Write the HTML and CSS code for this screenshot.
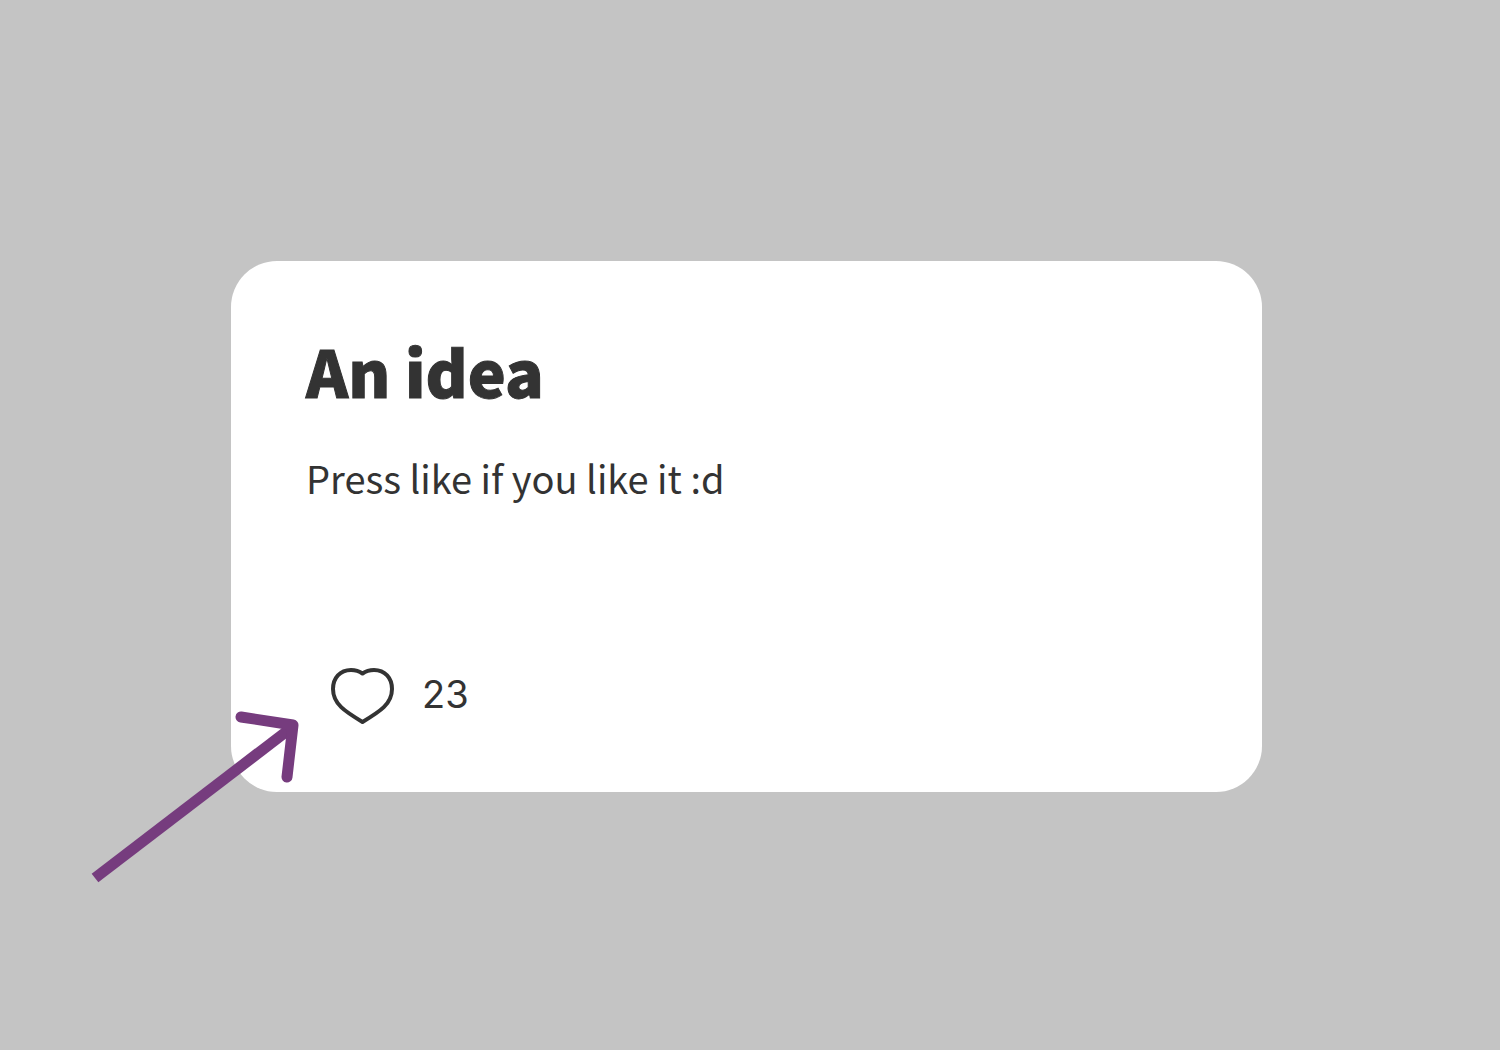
FILE: index.html
```
<!DOCTYPE html>
<html lang="en">
<head>
  <meta charset="UTF-8">
  <meta name="viewport" content="width=device-width, initial-scale=1.0">
  <title>An idea</title>

  <link rel="stylesheet" href="styles.css">
</head>

<body>
  <main class="card">
    <h1 class="title">An idea</h1>
    <p class="text">Press like if you like it :d</p>

    <button type="button" class="like" aria-label="Like, 23 likes">
      <svg class="heart" viewBox="0 0 63 56" aria-hidden="true">
        <path d="M31.5 5.5 C28 3 24.5 2 20 2 C9 2 2 10 2 21 C2 36 14 43.5 31.5 54 C49 43.5 61 36 61 21 C61 10 54 2 43 2 C38.5 2 35 3 31.5 5.5 Z"/>
      </svg>
      <span class="count">23</span>
    </button>

    <svg class="arrow" viewBox="0 0 212 180" aria-hidden="true">
      <path class="shaft" d="M5 173 L201 23"/>
      <path class="head" d="M151 12 L203 20 L197 72"/>
    </svg>
  </main>
</body>
</html>
```
FILE: styles.css
```
*, *::before, *::after {
  box-sizing: border-box;
}

body {
  background-color: #C4C4C4;
  color: #333;
  margin: 0;
  min-height: 100vh;
  padding: 27px 238px 24px 231px;
  display: flex;
  align-items: center;
  font-family: "Noto Sans CJK SC", "Noto Sans", sans-serif;
}

.card {
  position: relative;
  flex: 1;
  padding: 68px 75px;
  background-color: white;
  border-radius: 46px;
}

.title {
  margin: 0 0 42px;
  font-size: 64px;
  font-weight: 900;
  line-height: 82px;
  -webkit-text-stroke: 1px #333;
}

.text {
  margin: 0 0 165px;
  font-size: 38px;
  line-height: 50px;
}

.like {
  display: flex;
  align-items: flex-start;
  gap: 28px;
  padding: 0 25px;
  border: none;
  background: none;
  color: inherit;
  cursor: pointer;
}

.heart {
  width: 63px;
  height: 56px;
  fill: none;
  stroke: #333;
  stroke-width: 4;
  stroke-linejoin: round;
}

.count {
  font-family: Inter, "Liberation Sans", sans-serif;
  font-size: 38px;
  line-height: 52px;
}

/* arrow pointing at the like button, hangs over the card corner */
.arrow {
  position: absolute;
  left: -141px;
  bottom: -93px;
  width: 212px;
  height: 180px;
  fill: none;
  stroke: #763C7E;
  stroke-width: 11;
  pointer-events: none;
}

.head {
  stroke-linecap: round;
  stroke-linejoin: round;
}
```
